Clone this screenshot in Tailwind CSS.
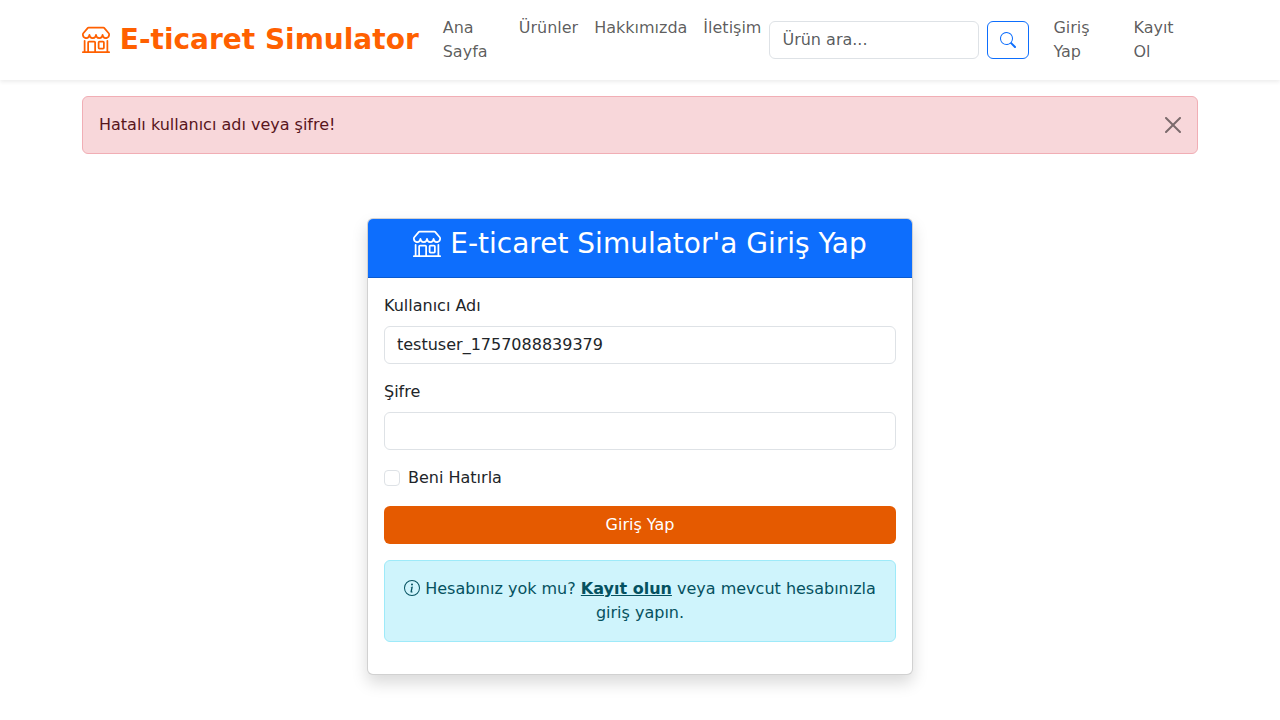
<!DOCTYPE html>
<html lang="tr">
<head>
<meta charset="utf-8">
<meta name="viewport" content="width=device-width, initial-scale=1">
<title>Giriş Yap - E-ticaret Simulator</title>
<script src="https://cdn.jsdelivr.net/npm/@tailwindcss/browser@4"></script>
</head>
<body class="bg-white font-['DejaVu_Sans',sans-serif] text-base text-[#212529]">
<svg class="hidden" aria-hidden="true">
  <symbol id="shop" viewBox="0 0 16 16"><path d="M2.97 1.35A1 1 0 0 1 3.73 1h8.54a1 1 0 0 1 .76.35l2.609 3.044A1.5 1.5 0 0 1 16 5.37v.255a2.375 2.375 0 0 1-4.25 1.458A2.37 2.37 0 0 1 9.875 8 2.37 2.37 0 0 1 8 7.083 2.37 2.37 0 0 1 6.125 8a2.37 2.37 0 0 1-1.875-.917A2.375 2.375 0 0 1 0 5.625V5.37a1.5 1.5 0 0 1 .361-.976zm1.78 4.275a1.375 1.375 0 0 0 2.75 0 .5.5 0 0 1 1 0 1.375 1.375 0 0 0 2.75 0 .5.5 0 0 1 1 0 1.375 1.375 0 1 0 2.75 0V5.37a.5.5 0 0 0-.12-.325L12.27 2H3.73L1.12 5.045A.5.5 0 0 0 1 5.37v.255a1.375 1.375 0 0 0 2.75 0 .5.5 0 0 1 1 0M1.5 8.5A.5.5 0 0 1 2 9v6h1v-5a1 1 0 0 1 1-1h3a1 1 0 0 1 1 1v5h6V9a.5.5 0 0 1 1 0v6h.5a.5.5 0 0 1 0 1H.5a.5.5 0 0 1 0-1H1V9a.5.5 0 0 1 .5-.5M4 15h3v-5H4zm5-5a1 1 0 0 1 1-1h2a1 1 0 0 1 1 1v3a1 1 0 0 1-1 1h-2a1 1 0 0 1-1-1zm3 0h-2v3h2z"/></symbol>
</svg>

<nav class="bg-white py-2 shadow-[0_2px_4px_rgba(0,0,0,0.075)]">
  <div class="mx-auto flex max-w-[1140px] items-center px-3">
    <a href="#" class="mr-4 shrink-0 whitespace-nowrap text-[28px] leading-[42px] font-bold text-[#ff6000]"><svg class="inline-block size-7 align-[-0.125em]" fill="currentColor" aria-hidden="true"><use href="#shop"/></svg> E-ticaret Simulator</a>
    <ul class="mr-auto flex text-black/65">
      <li class="w-[76px]"><a href="#" class="block p-2">Ana Sayfa</a></li>
      <li><a href="#" class="block p-2">Ürünler</a></li>
      <li><a href="#" class="block p-2">Hakkımızda</a></li>
      <li><a href="#" class="block p-2">İletişim</a></li>
    </ul>
    <form class="mr-4 flex gap-2" role="search">
      <input type="search" aria-label="Ürün ara" placeholder="Ürün ara..." class="w-[210px] rounded-md border border-[#dee2e6] bg-white px-3 py-1.5 leading-6 placeholder:text-[#212529]/75">
      <button type="button" aria-label="Ara" class="h-[38px] rounded-md border border-[#0d6efd] px-3 text-[#0d6efd]"><svg class="size-4" viewBox="0 0 16 16" fill="currentColor" aria-hidden="true"><path d="M11.742 10.344a6.5 6.5 0 1 0-1.397 1.398h-.001q.044.06.098.115l3.85 3.85a1 1 0 0 0 1.415-1.414l-3.85-3.85a1 1 0 0 0-.115-.1zM12 6.5a5.5 5.5 0 1 1-11 0 5.5 5.5 0 0 1 11 0"/></svg></button>
    </form>
    <ul class="flex text-black/65">
      <li class="w-20"><a href="#" class="block p-2">Giriş Yap</a></li>
      <li class="w-[73px]"><a href="#" class="block p-2">Kayıt Ol</a></li>
    </ul>
  </div>
</nav>

<main class="mx-auto max-w-[1140px] px-3 pt-4">
  <div role="alert" class="flex items-center justify-between rounded-md border border-[#f1aeb5] bg-[#f8d7da] p-4 text-[#58151c]">
    <span>Hatalı kullanıcı adı veya şifre!</span>
    <button type="button" aria-label="Kapat" class="text-black opacity-50"><svg class="size-4" viewBox="0 0 16 16" fill="currentColor" aria-hidden="true"><path d="M.293.293a1 1 0 0 1 1.414 0L8 6.586 14.293.293a1 1 0 1 1 1.414 1.414L9.414 8l6.293 6.293a1 1 0 0 1-1.414 1.414L8 9.414l-6.293 6.293a1 1 0 0 1-1.414-1.414L6.586 8 .293 1.707a1 1 0 0 1 0-1.414"/></svg></button>
  </div>

  <section class="mx-auto mt-16 mb-6 max-w-[546px] rounded-md border border-black/18 bg-white shadow-[0_8px_16px_rgba(0,0,0,0.15)]">
    <header class="rounded-t-[5px] border-b border-black/18 bg-[#0d6efd] px-4 pt-2 pb-4 text-center text-white">
      <h1 class="text-[28px] leading-[34px]"><svg class="inline-block size-7 align-[-0.125em]" fill="currentColor" aria-hidden="true"><use href="#shop"/></svg> E-ticaret Simulator'a Giriş Yap</h1>
    </header>
    <form class="flex flex-col gap-4 px-4 pt-4 pb-8">
      <div class="flex flex-col gap-2">
        <label for="username">Kullanıcı Adı</label>
        <input id="username" type="text" value="testuser_1757088839379" class="rounded-md border border-[#dee2e6] px-3 py-1.5 leading-6">
      </div>
      <div class="flex flex-col gap-2">
        <label for="password">Şifre</label>
        <input id="password" type="password" class="rounded-md border border-[#dee2e6] px-3 py-1.5 leading-6">
      </div>
      <div class="flex items-center gap-2">
        <input id="remember" type="checkbox" class="size-4 appearance-none rounded border border-[#dee2e6] bg-white checked:bg-[#0d6efd]">
        <label for="remember">Beni Hatırla</label>
      </div>
      <button type="button" class="h-[38px] rounded-md bg-[#e55a00] text-white">Giriş Yap</button>
      <div class="rounded-md border border-[#9eeaf9] bg-[#cff4fc] p-4 text-center text-[#055160]"><svg class="inline-block size-4 align-[-0.125em]" viewBox="0 0 16 16" fill="currentColor" aria-hidden="true"><path d="M8 15A7 7 0 1 1 8 1a7 7 0 0 1 0 14m0 1A8 8 0 1 0 8 0a8 8 0 0 0 0 16"/><path d="m8.93 6.588-2.29.287-.082.38.45.083c.294.07.352.176.288.469l-.738 3.468c-.194.897.105 1.319.808 1.319.545 0 1.178-.252 1.465-.598l.088-.416c-.2.176-.492.246-.686.246-.275 0-.375-.193-.304-.533zM9 4.5a1 1 0 1 1-2 0 1 1 0 0 1 2 0"/></svg> Hesabınız yok mu? <a href="#" class="font-bold underline">Kayıt olun</a> veya mevcut hesabınızla giriş yapın.</div>
    </form>
  </section>
</main>
</body>
</html>
